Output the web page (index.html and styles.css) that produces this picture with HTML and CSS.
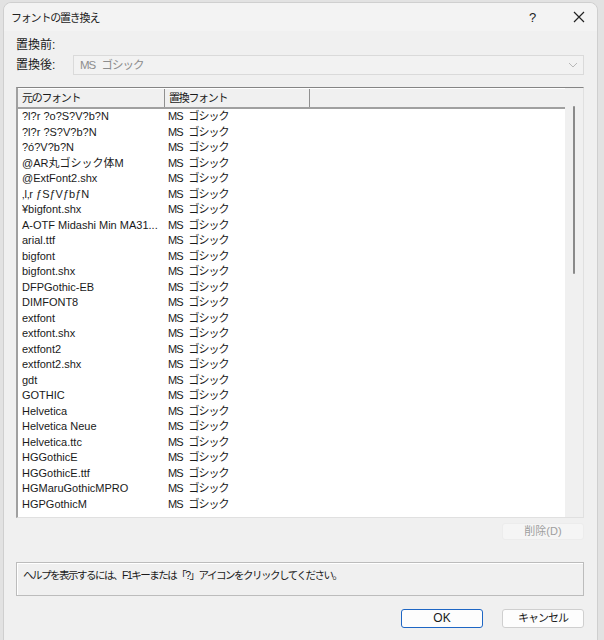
FILE: index.html
```html
<!DOCTYPE html>
<html lang="ja">
<head>
<meta charset="utf-8">
<link rel="stylesheet" href="styles.css">
</head>
<body>
<div class="dialog">
  <div class="titlebar">
    <span class="title">フォントの置き換え</span>
    <span class="help">?</span>
    <svg class="close" width="12" height="12" viewBox="0 0 12 12"><path d="M1 1L11 11M11 1L1 11" stroke="#222" stroke-width="1.2" fill="none"/></svg>
  </div>
  <div class="content">
    <div class="line">置換前:</div>
    <div class="line after">
      <span class="lbl">置換後:</span>
      <div class="combo">
        <span class="jp">MS ゴシック</span>
        <svg class="chev" width="10" height="6" viewBox="0 0 10 6"><path d="M1 1L5 5L9 1" stroke="#b8b8b8" stroke-width="1" fill="none"/></svg>
      </div>
    </div>
    <div class="listbox">
      <div class="listmain">
        <div class="header">
          <div class="hcol c1">元のフォント</div>
          <div class="hcol c2">置換フォント</div>
        </div>
        <div class="rows" id="rows"></div>
      </div>
      <div class="scroll"><div class="thumb"></div></div>
    </div>
    <div class="delrow"><button class="btn disabled">削除(D)</button></div>
    <div class="helpbox">ヘルプを表示するには、F1キーまたは「?」アイコンをクリックしてください。</div>
    <div class="btnrow">
      <button class="btn ok">OK</button>
      <button class="btn cancel">キャンセル</button>
    </div>
  </div>
</div>
<script src="script.js"></script>
</body>
</html>
```
FILE: script.js
```js
const names = ["?l?r ?o?S?V?b?N","?l?r ?S?V?b?N","?ó?V?b?N","@AR丸ゴシック体M","@ExtFont2.shx","‚l‚r ƒSƒVƒbƒN","¥bigfont.shx","A-OTF Midashi Min MA31...","arial.ttf","bigfont","bigfont.shx","DFPGothic-EB","DIMFONT8","extfont","extfont.shx","extfont2","extfont2.shx","gdt","GOTHIC","Helvetica","Helvetica Neue","Helvetica.ttc","HGGothicE","HGGothicE.ttf","HGMaruGothicMPRO","HGPGothicM"];
const rows = document.getElementById('rows');
names.forEach(n => {
  const r = document.createElement('div');
  r.className = 'row';
  const a = document.createElement('span'); a.className = 'c1'; a.textContent = n;
  const b = document.createElement('span'); b.className = 'c2 jp'; b.textContent = 'MS ゴシック';
  r.appendChild(a); r.appendChild(b);
  rows.appendChild(r);
});
```
FILE: styles.css
```css
html, body { margin: 0; padding: 0; }
body {
  background: #e2e2e2;
  width: 604px; height: 640px; overflow: hidden;
  font-family: "Liberation Sans", "Noto Sans CJK JP", sans-serif;
  font-size: 12px; color: #1a1a1a;
}
.dialog {
  margin: 2px 0 0 3px;
  width: 595px; height: 640px;
  background: #f0f0f0;
  border: 1px solid #cfcfcf;
  border-radius: 8px 8px 0 0;
  box-sizing: border-box;
}
.titlebar {
  height: 28px;
  display: flex; align-items: center;
  padding-left: 7px;
  background: #f3f3f3;
  border-radius: 8px 8px 0 0;
}
.title { font-size: 11px; letter-spacing: -1.2px; flex: 1; color: #222; }
.help { font-size: 13px; width: 14px; margin-right: 30px; color: #222; }
.close { margin-right: 12px; }
.content { padding: 5px 13px 0 12px; }
.line { height: 18px; line-height: 18px; }
.after { display: flex; align-items: center; height: 22px; }
.lbl { width: 57px; }
.jp { font-size: 11px; letter-spacing: -1px; word-spacing: 4px; }
.combo {
  flex: 1; height: 20px;
  border: 1px solid #dadada; background: #f2f2f2;
  box-sizing: border-box;
  display: flex; align-items: center; justify-content: space-between;
  padding: 0 5px 0 6px; color: #8d8d8d;
}
.combo .jp { font-size: 11.5px; }
.listbox {
  margin-top: 11px;
  height: 431px;
  border-top: 1px solid #858585;
  border-left: 2px solid #a0a0a0;
  border-right: 1px solid #e0e0e0;
  border-bottom: 1px solid #e0e0e0;
  box-sizing: border-box;
  display: flex; background: #fff;
}
.listmain { flex: 1; overflow: hidden; }
.header {
  height: 21px; display: flex;
  background: #f0f0f0;
  border-top: 1px solid #fff;
  border-bottom: 2px solid #a0a0a0;
  box-sizing: border-box;
}
.hcol {
  line-height: 19px; padding-left: 4px; box-sizing: border-box;
  border-right: 1px solid #909090;
  font-size: 11px; letter-spacing: -1.3px;
}
.hcol.c1 { width: 147px; }
.hcol.c2 { width: 145px; }
.row { height: 15.5px; line-height: 15.5px; display: flex; white-space: nowrap; font-size: 11px; }
.row .c1 { width: 146px; padding-left: 4px; box-sizing: border-box; overflow: hidden; }
.row .c2 { padding-left: 4px; }
.scroll { width: 18px; background: #f0f0f0; position: relative; }
.thumb {
  position: absolute; left: 8px; top: 18px;
  width: 2px; height: 168px; background: #8a8a8a; border-radius: 1px;
}
.delrow { display: flex; justify-content: flex-end; margin-top: 5px; }
.btn {
  font-family: "Liberation Sans", "Noto Sans CJK JP", sans-serif;
  font-size: 12px; color: #1a1a1a;
  width: 82px; height: 19px; padding: 0;
  background: #fdfdfd; border: 1px solid #cfcfcf; border-radius: 3px;
  box-sizing: border-box; line-height: 17px;
}
.btn.disabled { background: #f5f5f5; border-color: #ececec; color: #9e9e9e; height: 17px; line-height: 15px; font-size: 11px; }
.btn.cancel { font-size: 11px; letter-spacing: -1px; }
.helpbox {
  margin-top: 22px; height: 34px;
  border: 1px solid #bcbcbc; box-shadow: inset 1px 1px 0 #fff;
  box-sizing: border-box; padding: 4px 0 0 6px;
  line-height: 16px; font-size: 10.5px; letter-spacing: -1.5px;
}
.btnrow { display: flex; justify-content: flex-end; gap: 19px; margin-top: 13px; }
.btn.ok { border: 1.5px solid #1e66c4; }
```
